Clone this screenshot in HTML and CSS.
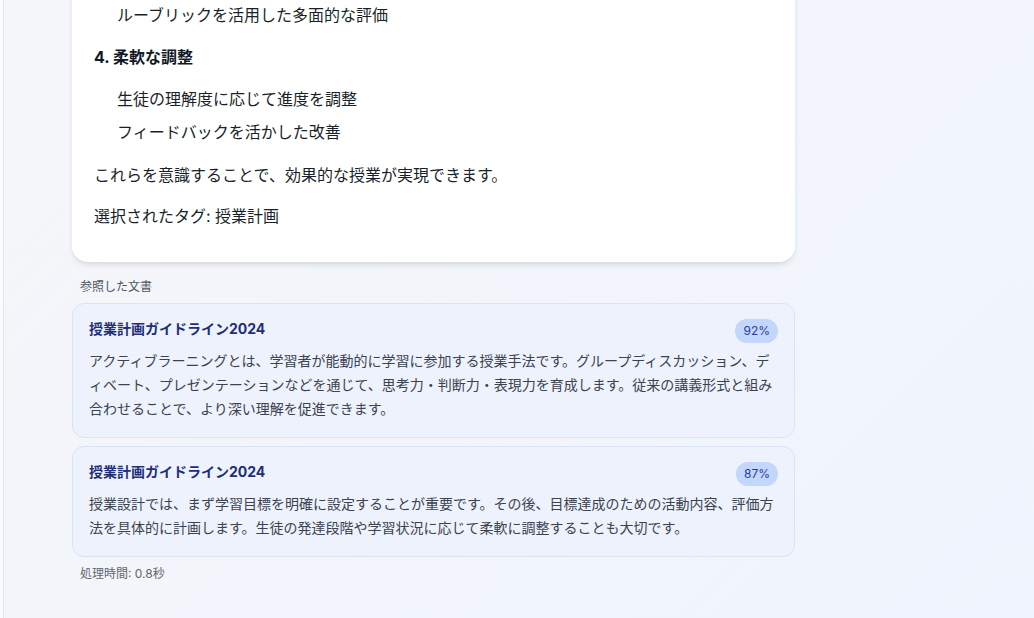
FILE: index.html
```html
<!DOCTYPE html>
<html lang="ja">
<head>
<meta charset="utf-8">
<title>チャット</title>
<link rel="stylesheet" href="styles.css">
</head>
<body>
<div class="app">
  <aside class="sidebar"></aside>
  <main class="chat">
    <div class="thread">
      <div class="bubble">
        <ul class="points">
          <li>ルーブリックを活用した多面的な評価</li>
        </ul>
        <h3 class="step">4. 柔軟な調整</h3>
        <ul class="points">
          <li>生徒の理解度に応じて進度を調整</li>
          <li>フィードバックを活かした改善</li>
        </ul>
        <p class="para">これらを意識することで、効果的な授業が実現できます。</p>
        <p class="para">選択されたタグ: 授業計画</p>
      </div>

      <div class="sources">
        <div class="sources-label">参照した文書</div>
        <div class="source-card">
          <div class="source-head">
            <span class="source-title">授業計画ガイドライン2024</span>
            <span class="score">92%</span>
          </div>
          <p class="source-body">アクティブラーニングとは、学習者が能動的に学習に参加する授業手法です。グループディスカッション、ディベート、プレゼンテーションなどを通じて、思考力・判断力・表現力を育成します。従来の講義形式と組み合わせることで、より深い理解を促進できます。</p>
        </div>
        <div class="source-card">
          <div class="source-head">
            <span class="source-title">授業計画ガイドライン2024</span>
            <span class="score">87%</span>
          </div>
          <p class="source-body">授業設計では、まず学習目標を明確に設定することが重要です。その後、目標達成のための活動内容、評価方法を具体的に計画します。生徒の発達段階や学習状況に応じて柔軟に調整することも大切です。</p>
        </div>
      </div>

      <div class="meta">処理時間: 0.8秒</div>
    </div>
  </main>
</div>
</body>
</html>
```

FILE: styles.css
```css
* { box-sizing: border-box; }

html, body {
  margin: 0;
  padding: 0;
  height: 100%;
}

body {
  font-family: Inter, "Noto Sans CJK JP", sans-serif;
  color: #1f2937;
}

.app {
  display: flex;
  height: 100vh;
  overflow: hidden;
}

.sidebar {
  width: 4px;
  flex-shrink: 0;
  background: #fbfbfc;
  border-right: 1px solid #e2e5ea;
}

.chat {
  flex: 1;
  display: flex;
  flex-direction: column;
  justify-content: flex-end;
  overflow: hidden;
  padding: 0 0 36px 68px;
  background: linear-gradient(135deg, #f5f6f9 0%, #f2f5fb 50%, #eff4fe 100%);
}

.thread {
  width: 723px;
  flex-shrink: 0;
}

.bubble {
  background: #ffffff;
  border-radius: 16px;
  box-shadow: 0 4px 6px -1px rgba(0, 0, 0, 0.09), 0 2px 4px -2px rgba(0, 0, 0, 0.08);
  padding: 20px 22px 33px;
  font-size: 16px;
  line-height: 26px;
  color: #1a1f29;
}

.step {
  margin: 0;
  font-size: 16px;
  line-height: 26px;
  font-weight: 700;
  color: #111827;
}

.points {
  list-style: none;
  margin: 16px 0;
  padding: 0 0 0 23px;
}

.points li + li {
  margin-top: 7px;
}

.para {
  margin: 0;
}

.points + .para {
  margin-top: 17px;
}

.para + .para {
  margin-top: 15px;
}

.sources {
  margin-top: 17px;
}

.sources-label {
  font-size: 12px;
  line-height: 16px;
  color: #4b5563;
  padding-left: 8px;
  margin-bottom: 8px;
}

.source-card {
  background: #edf2fd;
  border: 1px solid #d9e3f6;
  border-radius: 12px;
  padding: 15px 16px 16px;
}

.source-card + .source-card {
  margin-top: 8px;
}

.source-head {
  display: flex;
  justify-content: space-between;
  align-items: flex-start;
  height: 24px;
  margin-bottom: 6px;
}

.source-title {
  font-size: 14px;
  line-height: 20px;
  font-weight: 700;
  color: #1e2f78;
}

.score {
  background: #c3d6fb;
  color: #2a3d9a;
  font-size: 12px;
  line-height: 16px;
  padding: 4px 8px;
  border-radius: 999px;
}

.source-body {
  margin: 0;
  font-size: 14px;
  line-height: 24px;
  color: #3b4250;
}

.meta {
  margin-top: 9px;
  padding-left: 8px;
  font-size: 12px;
  line-height: 16px;
  color: #5f6672;
}
```
